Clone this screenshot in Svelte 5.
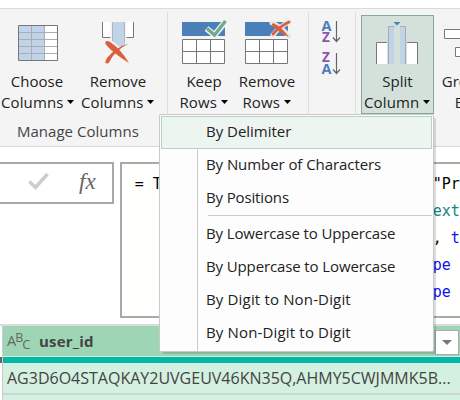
<script>
  const items = [
    { text: 'By Delimiter', sp: -0.02, active: true },
    { text: 'By Number of Characters', sp: -0.07 },
    { text: 'By Positions', sp: -0.14 },
    { divider: true },
    { text: 'By Lowercase to Uppercase', sp: -0.12 },
    { text: 'By Uppercase to Lowercase', sp: -0.12 },
    { text: 'By Digit to Non-Digit', sp: 0.16 },
    { text: 'By Non-Digit to Digit', sp: 0.16 }
  ];
</script>

{#snippet caret()}<svg class="caret" width="7" height="4" viewBox="0 0 7 4"><path d="M0 0h7L3.5 4z" fill="#000" /></svg>{/snippet}

{#snippet rows(kind)}
  <svg width="50" height="50" viewBox="0 0 50 50">
    <path d="M3 7h43v14H3z" fill="#4a7fb8" />
    <path d="M3.5 24.5h42v24h-42z" fill="#fff" stroke="#777" />
    <path d="M3 36.5h43M17.5 24v25M31.5 24v25" stroke="#777" />
    {#if kind === 'keep'}
      <path d="M27.5 13.5L35.5 20L47 6" fill="none" stroke="#f5f4f5" stroke-width="6" />
      <path d="M28 13.5L35.5 20L46.5 6" fill="none" stroke="#73a893" stroke-width="3.4" />
    {:else}
      <path d="M30 8Q38 11 47 21M47 7Q37 12 31 20" fill="none" stroke="#eee5e5" stroke-width="5" stroke-linecap="round" />
      <path d="M31 8Q39 11 47 22Q37 18 29.5 10z" fill="#d95f3e" />
      <path d="M47 7Q37 12 31 19" fill="none" stroke="#d95f3e" stroke-width="2.8" stroke-linecap="round" />
    {/if}
  </svg>
{/snippet}

<div class="app">
  <div class="ribbon">
    <section class="group manage">
      <div class="buttons">
        <div class="btn choose">
          <svg width="50" height="50" viewBox="0 0 50 50">
            <path d="M5.5 10.5h39v35h-39z" fill="#fff" />
            <path d="M6 11h25v34H6z" fill="#c1d3e9" />
            <path d="M6 17.5h38M6 24.5h38M6 31.5h38M6 38.5h38M18.5 11v34M31.5 11v34" stroke="#aaaeb3" />
            <path d="M5.5 10.5h39v35h-39z" fill="none" stroke="#777" />
          </svg>
          <span>Choose</span><span>Columns{@render caret()}</span>
        </div>
        <div class="btn remcol">
          <svg width="50" height="50" viewBox="0 0 50 50">
            <path d="M9.5 7v15.500h8V7M40.500 7v15.500h-9V7" fill="#fff" />
            <path d="M9.500 7v15.500H18M32 22.500h8.500V7" fill="none" stroke="#777" />
            <path d="M17.500 7h16v24h-16z" fill="#f5f4f5" />
            <path d="M19 7h13v23l-5 4h-4l-4-4z" fill="#c1d3e9" />
            <path d="M19.500 7v22M31.500 7v21" stroke="#b0b4ba" />
            <path d="M12 47L24 33L14 25M37 30L27 36L35 46" fill="none" stroke="#f5f4f5" stroke-width="5" />
            <path d="M12.500 29C11.500 26 14 25 17 27Q27 33 36 48Q25 41 18 35Q15 32 12.500 29z" fill="#d95f3e" />
            <path d="M36 28.500Q22 35 16 47.500Q15 49 12.500 48Q12 46 14 43Q23 32 36 28.500z" fill="#d95f3e" />
          </svg>
          <span>Remove</span><span>Columns{@render caret()}</span>
        </div>
      </div>
      <div class="title">Manage Columns</div>
    </section>
    <section class="group reduce">
      <div class="buttons">
        <div class="btn keep">{@render rows('keep')}<span>Keep</span><span>Rows{@render caret()}</span></div>
        <div class="btn remrow">{@render rows('remove')}<span>Remove</span><span>Rows{@render caret()}</span></div>
      </div>
    </section>
    <section class="group sort">
      <svg width="24" height="64" viewBox="0 0 24 64">
        <g font-family="Open Sans, sans-serif" font-weight="700" font-size="14.500">
          <text x="0.500" y="12" fill="#4a7fb8" textLength="10" lengthAdjust="spacingAndGlyphs">A</text>
          <text x="1" y="23" fill="#8a55aa" font-size="13.500">Z</text>
          <text x="1" y="43" fill="#8a55aa" font-size="13.500">Z</text>
          <text x="0.500" y="55" fill="#4a7fb8" textLength="10" lengthAdjust="spacingAndGlyphs">A</text>
        </g>
        <path d="M15.500 2v20M12 18.500l3.500 4 3.500-4M15.500 34v20M12 50.500l3.500 4 3.500-4" fill="none" stroke="#666" stroke-width="1.200" />
      </svg>
    </section>
    <section class="group transform">
      <div class="btn split">
        <svg width="50" height="50" viewBox="0 0 50 50">
          <path d="M4.500 49V27.500H15V49M35 49V27.500h10.500V49" fill="#fff" />
          <path d="M4.500 49V27.500H15M35 27.500h10.500V49" fill="none" stroke="#777" />
          <path d="M16.500 11.500h17V49h-17z" fill="#d3e1da" />
          <path d="M16 12h6v37h-6zM28 12h6v37h-6z" fill="#c1d3e9" />
          <path d="M16.500 49V11.500h6M28 11.500h5.500V49" fill="none" stroke="#aaa" />
          <path d="M21.500 7h7L25 10.500z" fill="#4a7fb8" />
        </svg>
        <span>Split</span><span>Column{@render caret()}</span>
      </div>
      <div class="btn groupby">
        <svg width="50" height="50" viewBox="0 0 50 50">
          <path d="M5.500 14.500h40v9h-40zM16.500 32.500h30v9h-30z" fill="#fff" stroke="#777" />
        </svg>
        <span>Group</span><span>By</span>
      </div>
    </section>
  </div>

  <div class="formula">
    <div class="tools">
      <svg width="22" height="20" viewBox="0 0 22 20"><path d="M1.500 9.500L7.500 15.500L19.500 2" fill="none" stroke="#ccc" stroke-width="3.500" /></svg>
      <i>fx</i>
    </div>
    <div class="code">
      <div>= T{' '.repeat(30)}"Pr</div>
      <div class="teal">{' '.repeat(33)}ext</div>
      <div>{' '.repeat(33)}, <b>t</b></div>
      <div class="blue">{' '.repeat(33)}pe</div>
      <div class="blue">{' '.repeat(33)}pe</div>
    </div>
  </div>

  <div class="grid">
    <div class="gutter"></div>
    <div class="column">
      <div class="head">
        <span class="abc"><span>A</span><span>B</span><span>C</span></span>
        <strong>user_id</strong>
        <div class="drop"><svg width="10" height="5" viewBox="0 0 10 5"><path d="M0 0h10L5 5z" fill="#777" /></svg></div>
      </div>
      <div class="quality"></div>
      <div class="cell">AG3D6O4STAQKAY2UVGEUV46KN35Q,AHMY5CWJMMK5B...</div>
      <div class="cell"></div>
    </div>
  </div>

  <div class="menu">
    {#each items as item}
      {#if item.divider}
        <div class="divider"></div>
      {:else}
        <div class="item" class:active={item.active} style="letter-spacing: {item.sp}px">{item.text}</div>
      {/if}
    {/each}
  </div>
</div>

<style>
  :global(body) { margin: 0; overflow: hidden; }
  .app { position: relative; width: 460px; height: 400px; overflow: hidden; background: #fff; box-sizing: border-box; padding-top: 8px; font: 15px/21px "Open Sans", "Noto Sans", sans-serif; color: #222; display: flex; flex-direction: column; }
  .app * { box-sizing: border-box; }
  svg { display: block; flex: none; }
  .ribbon { flex: none; height: 139px; display: flex; background: #f5f4f5; border-top: 1px solid #dadada; border-bottom: 1px solid #d8d8d8; overflow: hidden; }
  .group { flex: none; position: relative; display: flex; flex-direction: column; }
  .group::after { content: ''; position: absolute; right: 0; top: 3px; width: 1px; height: 131px; background: #dedede; }
  .manage { width: 168px; }
  .reduce { width: 141px; }
  .sort { width: 47px; padding: 10px 0 0 12px; }
  .transform { width: 150px; flex-direction: row; padding-left: 5px; }
  .buttons { display: flex; }
  .btn { display: flex; flex-direction: column; align-items: center; padding-top: 6px; letter-spacing: 0; white-space: nowrap; flex: none; }
  .btn > svg { margin-bottom: 6px; }
  .btn > span { display: flex; align-items: center; }
  .btn > span + span { letter-spacing: 0.15px; margin-left: -1px; }
  .caret { margin: -2px 0 0 3.5px; }
  .choose { width: 76px; }
  .choose > span { margin-left: -2px; }
  .remcol { width: 84px; }
  .keep { width: 72px; }
  .remrow { width: 54px; }
  .split { width: 73px; height: 99px; margin-top: 6px; padding-top: 0; background: #d3e1da; border: 1px solid #87a998; }
  .split > svg { margin: -1px 1px 6px 0; }
  .groupby { width: 60px; }
  .title { padding: 8px 0 0 17px; letter-spacing: 0.02px; color: #444; }
  .formula { flex: none; height: 177px; padding-top: 15px; display: flex; align-items: flex-start; gap: 6px; }
  .tools { width: 115px; height: 42px; border: 2px solid #a9a9a9; border-left: 0; display: flex; align-items: center; padding-left: 28px; }
  .tools svg { margin-top: -2px; }
  .tools i { margin: -3px 0 0 29px; font: italic 23px/24px "Liberation Serif", serif; color: #666; letter-spacing: 0; }
  .code { width: 345px; height: 156px; border: 2px solid #a9a9a9; border-right: 0; background: #fffffd; padding: 7px 0 0 13px; font: 15px/27px "DejaVu Sans Mono", monospace; white-space: pre; color: #000; overflow: hidden; display: flex; flex-direction: column; }
  .teal { color: #148484; }
  .blue, .code b { color: #1010f0; font-weight: 400; }
  .grid { flex: none; height: 76px; display: flex; border-top: 2px solid #dcdcdc; }
  .gutter { width: 3px; border-right: 1px solid #ccc; background: linear-gradient(#fff 31px, #666 31px, #666 37px, #fff 37px); }
  .column { flex: 1; min-width: 0; }
  .head { height: 31px; background: #9ed6b5; border-bottom: 1px solid #d7e8df; display: flex; align-items: center; color: #444; }
  .abc { display: flex; align-items: baseline; width: 36px; padding-left: 4px; font-size: 14.5px; line-height: 19px; color: #666; }
  .abc span:nth-child(1) { margin-top: 0; }
  .abc span:nth-child(2) { font-size: 12.5px; transform: translateY(-4px); margin-left: -1px; }
  .abc span:nth-child(3) { font-size: 13px; transform: translateY(3px); margin-left: -1px; }
  strong { letter-spacing: 0.2px; }
  .drop { margin: 2px 1px 0 auto; width: 24px; height: 25px; background: #fff; border: 1px solid #aaa; display: flex; align-items: center; justify-content: center; }
  .quality { height: 6px; background: #01b8aa; }
  .cell { height: 32px; border-bottom: 2px solid #ccd5d0; background: #d4f0e0; padding: 5px 0 0 4px; font-size: 16px; letter-spacing: 0; white-space: nowrap; color: #444; }
  .menu { position: absolute; left: 159px; top: 114px; width: 275px; height: 238px; padding: 1px; border: 1px solid #c9c9c9; border-radius: 2px; background: #fdfdfd; box-shadow: 3px 3px 1px -1px rgba(0, 0, 0, .14); }
  .menu::before { content: ''; position: absolute; left: 37px; top: 34px; bottom: 0; width: 1px; background: #ccc; }
  .item { position: relative; height: 33px; padding-left: 45px; line-height: 31px; white-space: nowrap; }
  .active { background: #edf5f1; border: 1px solid #b7d3c5; padding-left: 44px; line-height: 29px; }
  .divider { height: 3px; margin-left: 47px; border-top: 1px solid #ccc; }
</style>
